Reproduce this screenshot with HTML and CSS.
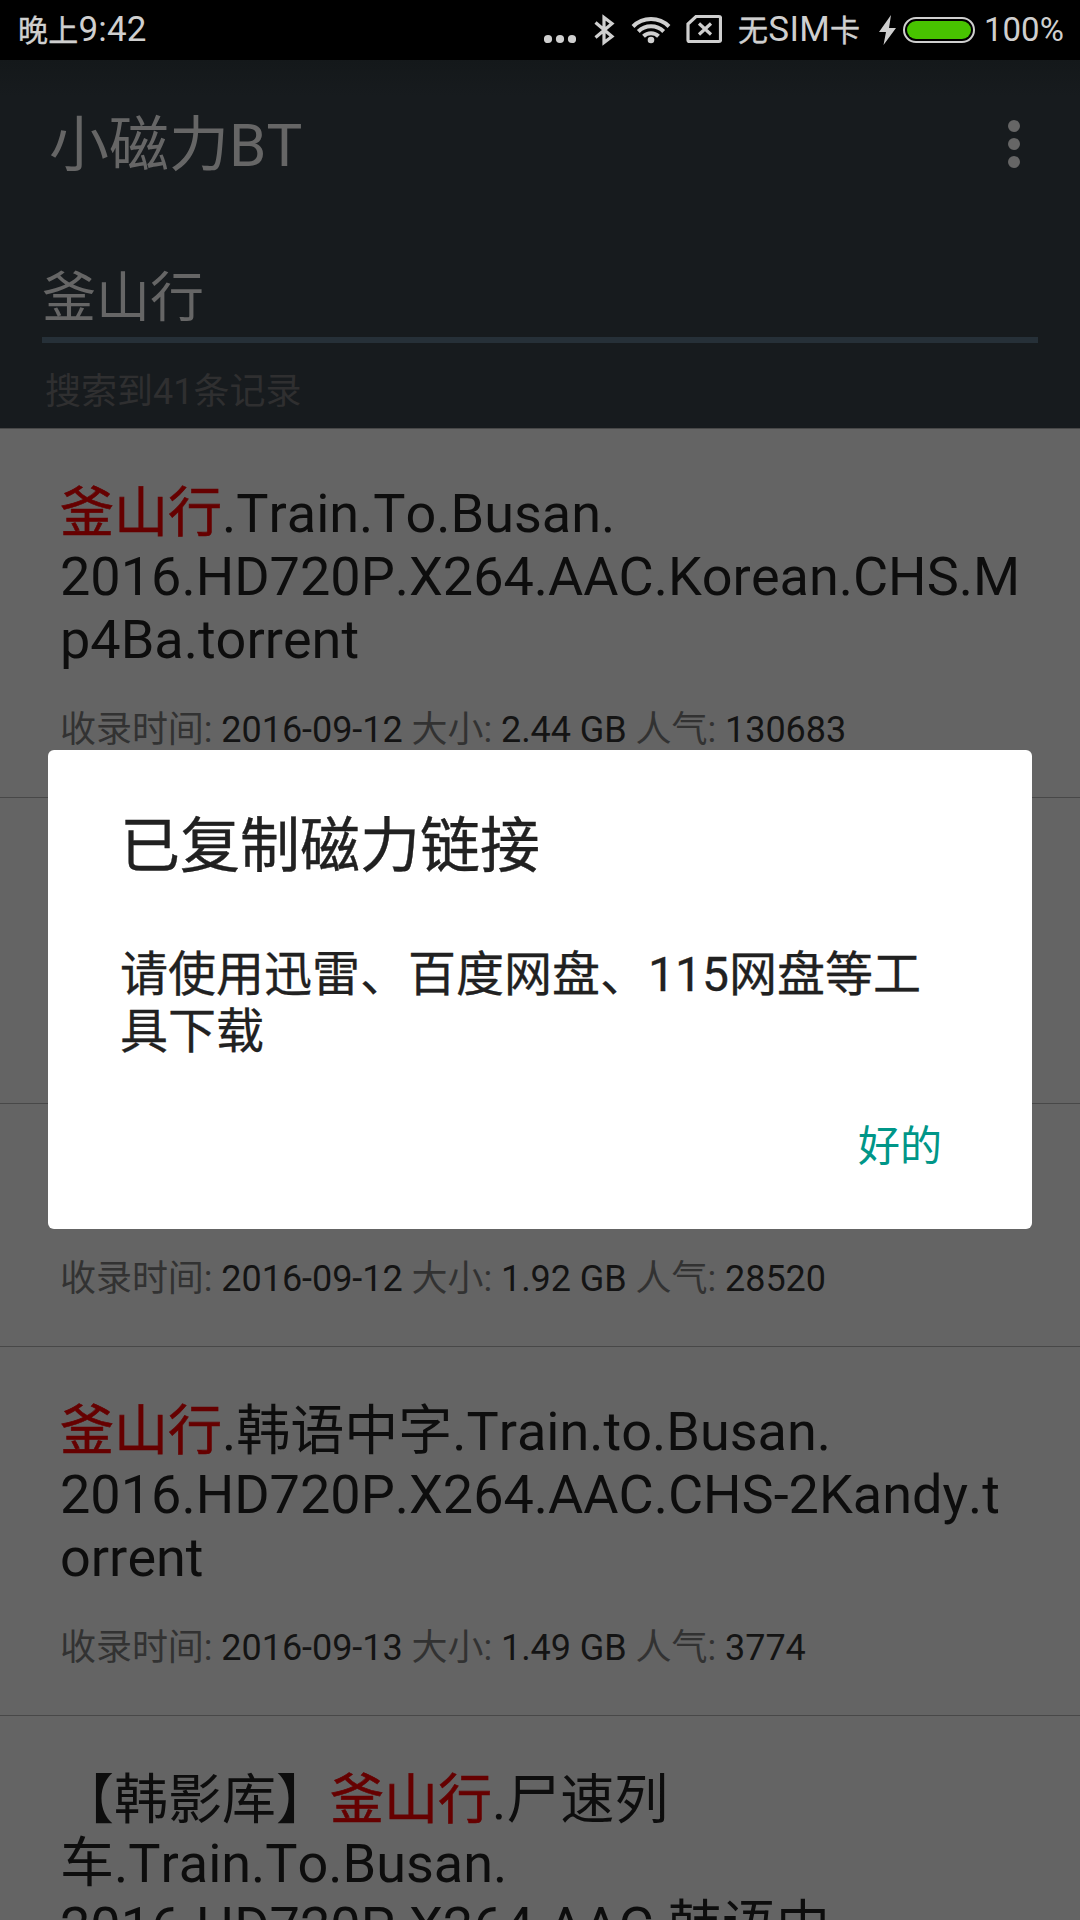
FILE: index.html
```html
<!DOCTYPE html>
<html lang="zh-CN">
<head>
<meta charset="utf-8">
<title>小磁力BT</title>
<link rel="stylesheet" href="styles.css">
</head>
<body>
<div class="screen">
  <div class="status">
    <div class="clock"><span class="cjk">晚上</span>9:42</div>
    <svg class="icon-more" width="32" height="60" viewBox="0 0 32 60"><circle cx="4" cy="39" r="4.1"/><circle cx="16" cy="39" r="4.1"/><circle cx="28" cy="39" r="4.1"/></svg>
    <svg class="icon-bt" width="22" height="60" viewBox="0 0 22 60"><path d="M1.500 22.500L18 36.500L10 42.500V17.500L18 23.500L1.500 37.500"/></svg>
    <svg class="icon-wifi" width="40" height="60" viewBox="0 0 40 60"><path d="M2 26.500A25.500 25.500 0 0 1 38 26.500M7.300 31.500A18 18 0 0 1 32.700 31.500M12.500 36.300A10.800 10.800 0 0 1 27.500 36.300"/><circle cx="20" cy="40" r="3.300"/></svg>
    <svg class="icon-sim" width="36" height="60" viewBox="0 0 36 60"><path d="M10 16.500H33Q34.500 16.500 34.500 18V40Q34.500 41.500 33 41.500H3.500Q2 41.500 2 40V24Z"/><path d="M13 23.500L25 34.500M25 23.500L13 34.500"/></svg>
    <div class="carrier"><span class="cjk">无</span>SIM<span class="cjk">卡</span></div>
    <svg class="icon-bolt" width="17" height="60" viewBox="0 0 17 60"><path d="M12 15L0 32H7L4.500 45L17 28H10Z"/></svg>
    <div class="battery"><div class="level"></div></div>
    <div class="percent">100%</div>
  </div>
  <div class="header">
    <div class="appbar">
      <h1>小磁力BT</h1>
      <div class="menu"><i></i><i></i><i></i></div>
    </div>
    <div class="search">釜山行</div>
    <div class="count">搜索到41条记录</div>
  </div>
  <div class="list">
    <div class="item">
      <div class="name"><em>釜山行</em>.Train.To.Busan.<br>2016.HD720P.X264.AAC.Korean.CHS.M<br>p4Ba.torrent</div>
      <div class="meta">收录时间: <b>2016-09-12</b> 大小: <b>2.44 GB</b> 人气: <b>130683</b></div>
    </div>
    <div class="item two-line"></div>
    <div class="item">
      <div class="name"></div>
      <div class="meta">收录时间: <b>2016-09-12</b> 大小: <b>1.92 GB</b> 人气: <b>28520</b></div>
    </div>
    <div class="item">
      <div class="name"><em>釜山行</em>.韩语中字.Train.to.Busan.<br>2016.HD720P.X264.AAC.CHS-2Kandy.t<br>orrent</div>
      <div class="meta">收录时间: <b>2016-09-13</b> 大小: <b>1.49 GB</b> 人气: <b>3774</b></div>
    </div>
    <div class="item">
      <div class="name">【韩影库】<em>釜山行</em>.尸速列<br>车.Train.To.Busan.<br>2016.HD720P.X264.AAC.韩语中</div>
    </div>
  </div>
  <div class="dialog">
    <h2>已复制磁力链接</h2>
    <p>请使用迅雷、百度网盘、115网盘等工具下载</p>
    <div class="ok">好的</div>
  </div>
</div>
</body>
</html>
```
FILE: styles.css
```css
* { box-sizing: border-box; margin: 0; padding: 0; }
body { font-family: Roboto, "Noto Sans CJK SC", sans-serif; background: #646464; font-kerning: none; }
.screen { position: relative; width: 1080px; height: 1920px; overflow: hidden; }

.status { display: flex; align-items: center; height: 60px; background: #000; color: #cfcfcf; font-size: 35px; line-height: 62px; white-space: nowrap; }
.status svg { display: block; flex: none; fill: #cfcfcf; }
.status .cjk { font-size: 30px; -webkit-text-stroke: 0.4px; }
.clock { flex: none; width: 544px; padding-left: 18px; letter-spacing: 0.2px; }
.icon-bt { margin-left: 18px; }
.status .icon-bt, .status .icon-wifi path, .status .icon-sim { fill: none; stroke: #cfcfcf; stroke-width: 3.2; }
.status .icon-wifi path { stroke-width: 4; }
.icon-wifi { margin-left: 15px; }
.icon-sim { margin-left: 15px; }
.carrier { flex: none; width: 122px; margin-left: 16px; letter-spacing: 0.3px; }
.icon-bolt { margin-left: 19px; }
.battery { flex: none; width: 72px; height: 26px; margin-left: 7px; padding: 2px; border: 2px solid #cfcfcf; border-radius: 13px; }
.level { height: 18px; border-radius: 9px; background: #48c400; }
.percent { margin-left: 9px; font-size: 33px; line-height: 64px; }

.header { height: 368px; background: linear-gradient(#14181a, #171b1e 36px); color: #666; }
.appbar { display: flex; justify-content: space-between; height: 168px; padding: 0 60px 0 49px; }
h1 { padding-top: 2px; font-size: 60px; font-weight: 400; line-height: 168px; }
.menu { display: flex; flex-direction: column; gap: 6px; padding-top: 60px; }
.menu i { width: 12px; height: 12px; border-radius: 50%; background: #666; }
.search { height: 115px; margin: 0 42px; border-bottom: 6px solid #263038; font-size: 54px; line-height: 142px; }
.count { padding: 25px 0 0 45px; color: #2f2f30; font-size: 36px; line-height: 48px; }

.item { height: 369px; padding: 53px 60px 0; border-top: 1px solid #484848; }
.item.two-line { height: 306px; }
.item:nth-child(3) { height: 243px; }
.name { min-height: 63px; color: #0d0d0d; font-size: 54px; line-height: 63px; white-space: nowrap; }
.name em { color: #660000; font-style: normal; -webkit-text-stroke: 0.6px; }
.meta { margin-top: 38px; color: #323232; font-size: 36px; line-height: 42px; letter-spacing: -0.05px; white-space: nowrap; }
.meta b { color: #141414; font-weight: 400; }

.dialog { position: absolute; left: 48px; top: 750px; width: 984px; height: 479px; padding: 57px 72px 0; border-radius: 6px; background: #fff; color: #212121; }
h2 { font-size: 60px; font-weight: 400; line-height: 80px; -webkit-text-stroke: 0.4px; }
.dialog p { margin-top: 59px; width: 820px; font-size: 48px; line-height: 57px; -webkit-text-stroke: 0.3px; }
.ok { margin-top: 57px; padding-right: 18px; color: #009688; font-size: 42px; line-height: 60px; text-align: right; }
```
